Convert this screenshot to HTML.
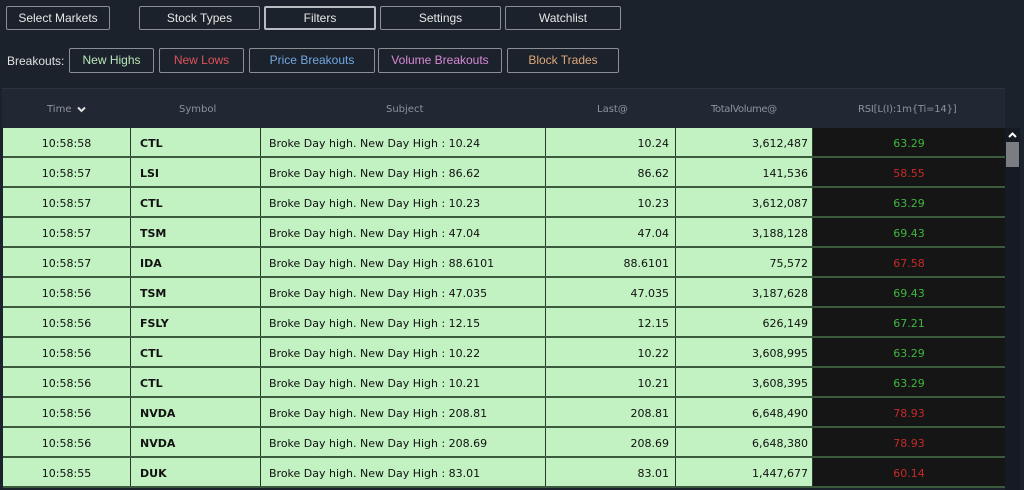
<!DOCTYPE html>
<html><head><style>
*{box-sizing:border-box;margin:0;padding:0}
body{width:1024px;height:490px;background:#1c222c;font-family:"Liberation Sans",sans-serif;position:relative;overflow:hidden}
.b{position:absolute;border:1px solid #8a8f96;border-radius:2px;color:#e6e6e6;font-size:12px;text-align:center;background:#1c222c}
.t{top:6px;height:24px;line-height:22px}
.t.sel{border:2px solid #b7bcc2;line-height:20px}
.k{top:48px;height:25px;line-height:23px;font-size:12px}
.lbl{position:absolute;left:7px;top:54px;color:#e0e0e0;font-size:12px}
.hdr{position:absolute;left:2px;top:88px;width:1003px;height:40px;background:#212834;border-top:1px solid #2c333d}
.hdr span{position:absolute;top:15px;color:#8e949b;font-size:10px;font-family:"DejaVu Sans",sans-serif}
.rows{position:absolute;left:3px;top:128px;width:1002px}
.r{height:30px;display:flex;border-bottom:2px solid #3c5a3c;font-family:"DejaVu Sans",sans-serif;font-size:11px;color:#111}
.r div{line-height:28px;padding-top:2px;background:#c2f1c2;border-right:1px solid #2a3a2a;white-space:nowrap;overflow:hidden}
.c1{width:128px;text-align:center}
.c2{width:130px;padding-left:9px;font-weight:bold}
.c3{width:285px;padding-left:8px}
.c4{width:130px;text-align:right;padding-right:6px}
.c5{width:137px;text-align:right;padding-right:4px}
.r div.c6{width:192px;text-align:center;background:#151515;border-right:none}
.g{color:#3fb63f}.red{color:#c42a2a}
.sb{position:absolute;left:1005px;top:128px;width:15px;height:362px;background:#161b23}
</style></head><body>
<div class="b t" style="left:6px;width:104px">Select Markets</div>
<div class="b t" style="left:139px;width:121px">Stock Types</div>
<div class="b t sel" style="left:264px;width:112px">Filters</div>
<div class="b t" style="left:380px;width:121px">Settings</div>
<div class="b t" style="left:505px;width:116px">Watchlist</div>
<div class="lbl">Breakouts:</div>
<div class="b k" style="left:69px;width:85px;color:#b9e6b9">New Highs</div>
<div class="b k" style="left:159px;width:85px;color:#e0525a">New Lows</div>
<div class="b k" style="left:249px;width:126px;color:#6fa8e0">Price Breakouts</div>
<div class="b k" style="left:378px;width:124px;color:#d78ad6">Volume Breakouts</div>
<div class="b k" style="left:507px;width:112px;color:#dca87a">Block Trades</div>
<div class="hdr">
<span style="left:45px">Time</span>
<svg style="position:absolute;left:75px;top:17px" width="9" height="7" viewBox="0 0 9 7"><path d="M1 1.5L4.5 5L8 1.5" stroke="#e0e0e0" stroke-width="2" fill="none"/></svg>
<span style="left:177px">Symbol</span>
<span style="left:384px">Subject</span>
<span style="left:595px">Last@</span>
<span style="left:709px;letter-spacing:-0.4px">TotalVolume@</span>
<span style="left:856px;letter-spacing:-0.2px">RSI[L(I):1m{Ti=14}]</span>
</div>
<div class="rows">
<div class="r"><div class="c1">10:58:58</div><div class="c2">CTL</div><div class="c3">Broke Day high. New Day High : 10.24</div><div class="c4">10.24</div><div class="c5">3,612,487</div><div class="c6 g">63.29</div></div>
<div class="r"><div class="c1">10:58:57</div><div class="c2">LSI</div><div class="c3">Broke Day high. New Day High : 86.62</div><div class="c4">86.62</div><div class="c5">141,536</div><div class="c6 red">58.55</div></div>
<div class="r"><div class="c1">10:58:57</div><div class="c2">CTL</div><div class="c3">Broke Day high. New Day High : 10.23</div><div class="c4">10.23</div><div class="c5">3,612,087</div><div class="c6 g">63.29</div></div>
<div class="r"><div class="c1">10:58:57</div><div class="c2">TSM</div><div class="c3">Broke Day high. New Day High : 47.04</div><div class="c4">47.04</div><div class="c5">3,188,128</div><div class="c6 g">69.43</div></div>
<div class="r"><div class="c1">10:58:57</div><div class="c2">IDA</div><div class="c3">Broke Day high. New Day High : 88.6101</div><div class="c4">88.6101</div><div class="c5">75,572</div><div class="c6 red">67.58</div></div>
<div class="r"><div class="c1">10:58:56</div><div class="c2">TSM</div><div class="c3">Broke Day high. New Day High : 47.035</div><div class="c4">47.035</div><div class="c5">3,187,628</div><div class="c6 g">69.43</div></div>
<div class="r"><div class="c1">10:58:56</div><div class="c2">FSLY</div><div class="c3">Broke Day high. New Day High : 12.15</div><div class="c4">12.15</div><div class="c5">626,149</div><div class="c6 g">67.21</div></div>
<div class="r"><div class="c1">10:58:56</div><div class="c2">CTL</div><div class="c3">Broke Day high. New Day High : 10.22</div><div class="c4">10.22</div><div class="c5">3,608,995</div><div class="c6 g">63.29</div></div>
<div class="r"><div class="c1">10:58:56</div><div class="c2">CTL</div><div class="c3">Broke Day high. New Day High : 10.21</div><div class="c4">10.21</div><div class="c5">3,608,395</div><div class="c6 g">63.29</div></div>
<div class="r"><div class="c1">10:58:56</div><div class="c2">NVDA</div><div class="c3">Broke Day high. New Day High : 208.81</div><div class="c4">208.81</div><div class="c5">6,648,490</div><div class="c6 red">78.93</div></div>
<div class="r"><div class="c1">10:58:56</div><div class="c2">NVDA</div><div class="c3">Broke Day high. New Day High : 208.69</div><div class="c4">208.69</div><div class="c5">6,648,380</div><div class="c6 red">78.93</div></div>
<div class="r"><div class="c1">10:58:55</div><div class="c2">DUK</div><div class="c3">Broke Day high. New Day High : 83.01</div><div class="c4">83.01</div><div class="c5">1,447,677</div><div class="c6 red">60.14</div></div>
</div>
<div class="sb">
<svg style="position:absolute;left:3px;top:4px" width="9" height="6" viewBox="0 0 9 6"><path d="M1 5L4.5 1.5L8 5" stroke="#fff" stroke-width="2" fill="none"/></svg>
<div style="position:absolute;left:1px;top:14px;width:13px;height:25px;background:#7a7d82"></div>
</div>
</body></html>
